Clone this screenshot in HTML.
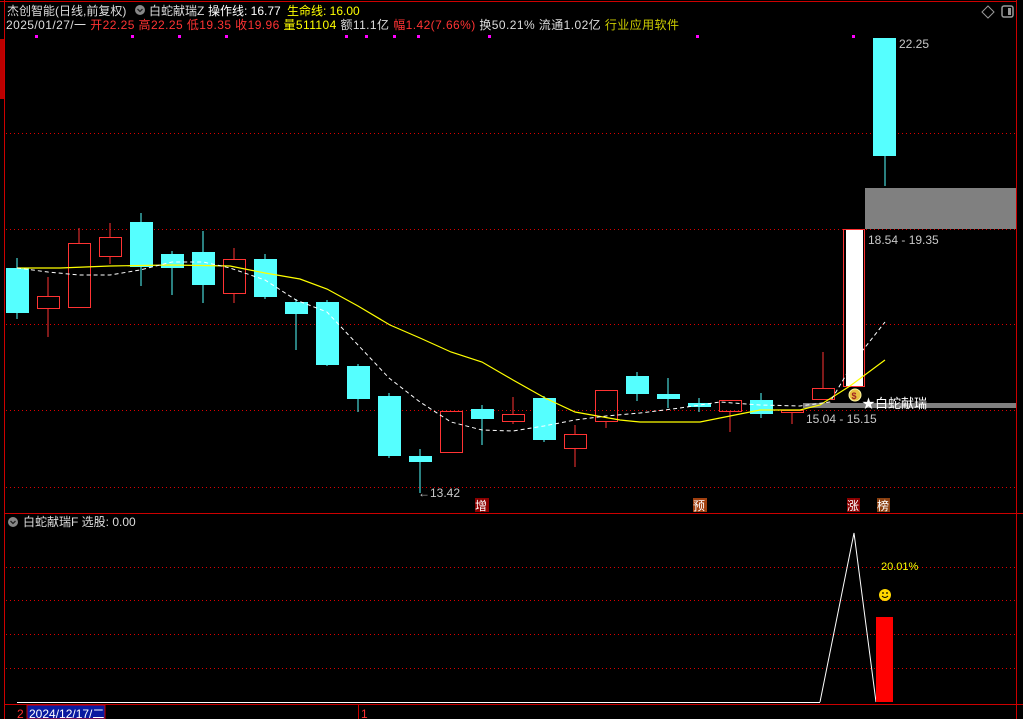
<!DOCTYPE html>
<html><head><meta charset="utf-8"><style>
body{margin:0;background:#000;width:1023px;height:719px;overflow:hidden;font-family:"Liberation Sans","Noto Sans CJK SC",sans-serif}
svg{position:absolute;left:0;top:0}
text{font-family:"Liberation Sans","Noto Sans CJK SC",sans-serif;font-size:12px}
</style></head><body>
<svg width="1023" height="719" xmlns="http://www.w3.org/2000/svg">
<rect width="1023" height="719" fill="#000"/>
<line x1="4.5" y1="0" x2="4.5" y2="719" stroke="#c00" />
<line x1="1016.5" y1="0" x2="1016.5" y2="719" stroke="#c00"/>
<line x1="0" y1="1.5" x2="1016" y2="1.5" stroke="#c00"/>
<rect x="0" y="39" width="4" height="60" fill="#b00"/>
<line x1="4" y1="513.5" x2="1023" y2="513.5" stroke="#c00"/>
<line x1="4" y1="704.5" x2="1023" y2="704.5" stroke="#c00"/>
<line x1="358.5" y1="705" x2="358.5" y2="719" stroke="#c00"/>
<g stroke="#d00" stroke-dasharray="1,3">
<line x1="6" y1="133.5" x2="1016" y2="133.5"/>
<line x1="6" y1="229.5" x2="1016" y2="229.5"/>
<line x1="6" y1="324.5" x2="1016" y2="324.5"/>
<line x1="6" y1="410.5" x2="1016" y2="410.5"/>
<line x1="6" y1="487.5" x2="1016" y2="487.5"/>
<line x1="6" y1="567.5" x2="1016" y2="567.5"/>
<line x1="6" y1="600.5" x2="1016" y2="600.5"/>
<line x1="6" y1="634.5" x2="1016" y2="634.5"/>
<line x1="6" y1="668.5" x2="1016" y2="668.5"/>
</g>
<g fill="#f0f">
<rect x="35" y="35" width="3" height="3"/><rect x="131" y="35" width="3" height="3"/><rect x="178" y="35" width="3" height="3"/><rect x="225" y="35" width="3" height="3"/><rect x="345" y="35" width="3" height="3"/><rect x="365" y="35" width="3" height="3"/><rect x="393" y="35" width="3" height="3"/><rect x="417" y="35" width="3" height="3"/><rect x="488" y="35" width="3" height="3"/><rect x="696" y="35" width="3" height="3"/><rect x="852" y="35" width="3" height="3"/>
</g>
<rect x="865" y="188" width="151" height="41" fill="#808080"/>
<rect x="803" y="403" width="213" height="5" fill="#808080"/>
<g fill="#55ffff" stroke="#55ffff">
<line x1="17" y1="258" x2="17" y2="319"/><rect x="6" y="268" width="23" height="45" stroke="none"/>
<line x1="141" y1="213" x2="141" y2="286"/><rect x="130" y="222" width="23" height="45" stroke="none"/>
<line x1="172" y1="251" x2="172" y2="295"/><rect x="161" y="254" width="23" height="14" stroke="none"/>
<line x1="203" y1="231" x2="203" y2="303"/><rect x="192" y="252" width="23" height="33" stroke="none"/>
<line x1="265" y1="254" x2="265" y2="299"/><rect x="254" y="259" width="23" height="38" stroke="none"/>
<line x1="296" y1="299" x2="296" y2="350"/><rect x="285" y="302" width="23" height="12" stroke="none"/>
<line x1="327" y1="300" x2="327" y2="366"/><rect x="316" y="302" width="23" height="63" stroke="none"/>
<line x1="358" y1="364" x2="358" y2="412"/><rect x="347" y="366" width="23" height="33" stroke="none"/>
<line x1="389" y1="393" x2="389" y2="458"/><rect x="378" y="396" width="23" height="60" stroke="none"/>
<line x1="420" y1="449" x2="420" y2="493"/><rect x="409" y="456" width="23" height="6" stroke="none"/>
<line x1="482" y1="405" x2="482" y2="445"/><rect x="471" y="409" width="23" height="10" stroke="none"/>
<line x1="544" y1="396" x2="544" y2="442"/><rect x="533" y="398" width="23" height="42" stroke="none"/>
<line x1="637" y1="372" x2="637" y2="401"/><rect x="626" y="376" width="23" height="18" stroke="none"/>
<line x1="668" y1="378" x2="668" y2="408"/><rect x="657" y="394" width="23" height="5" stroke="none"/>
<line x1="699" y1="398" x2="699" y2="412"/><rect x="688" y="403" width="23" height="4" stroke="none"/>
<line x1="761" y1="393" x2="761" y2="418"/><rect x="750" y="400" width="23" height="14" stroke="none"/>
<line x1="885" y1="156" x2="885" y2="186"/><rect x="873" y="38" width="23" height="118" stroke="none"/>
</g>
<g fill="none" stroke="#ff3333">
<line x1="48" y1="277" x2="48" y2="296"/><line x1="48" y1="308" x2="48" y2="337"/><rect x="37.5" y="296.5" width="22" height="12"/>
<line x1="79" y1="228" x2="79" y2="243"/><rect x="68.5" y="243.5" width="22" height="64"/>
<line x1="110" y1="223" x2="110" y2="237"/><line x1="110" y1="256" x2="110" y2="264"/><rect x="99.5" y="237.5" width="22" height="19"/>
<line x1="234" y1="248" x2="234" y2="259"/><line x1="234" y1="293" x2="234" y2="303"/><rect x="223.5" y="259.5" width="22" height="34"/>
<rect x="440.5" y="411.5" width="22" height="41"/>
<line x1="513" y1="397" x2="513" y2="414"/><line x1="513" y1="421" x2="513" y2="424"/><rect x="502.5" y="414.5" width="22" height="7"/>
<line x1="575" y1="425" x2="575" y2="434"/><line x1="575" y1="448" x2="575" y2="467"/><rect x="564.5" y="434.5" width="22" height="14"/>
<line x1="606" y1="421" x2="606" y2="428"/><rect x="595.5" y="390.5" width="22" height="31"/>
<line x1="730" y1="411" x2="730" y2="432"/><rect x="719.5" y="400.5" width="22" height="11"/>
<line x1="792" y1="412" x2="792" y2="424"/><rect x="781.5" y="410.5" width="22" height="2"/>
<line x1="823" y1="352" x2="823" y2="388"/><rect x="812.5" y="388.5" width="22" height="11"/>
<rect x="843.5" y="229.5" width="21" height="157"/>
</g>
<rect x="846" y="230" width="17" height="156" fill="#fff"/>
<polyline fill="none" stroke="#ffff00" stroke-width="1.2" points="17,268 60,268 110,266 170,265 230,266 265,273 300,279 327,289 358,306 390,325 420,338 451,352 482,362 513,380 545,398 575,412 620,420 640,422 700,422 720,418 760,410 800,410 820,405 850,386 885,360"/>
<polyline fill="none" stroke="#fff" stroke-dasharray="4,3" points="17,268 48,272 79,275 110,275 140,270 172,262 203,262 230,268 265,280 296,300 327,312 358,345 389,378 420,402 451,422 482,430 513,431 544,426 575,420 606,416 640,413 680,408 720,402 760,405 800,406 830,402 855,360 885,322"/>
<circle cx="855" cy="395" r="6" fill="#e8c040" stroke="#fff8a0"/>
<text x="851.5" y="399" fill="#a02020" style="font-size:9px;font-weight:bold">$</text>
<text x="862" y="408" fill="#fff" style="font-size:13px">★白蛇献瑞</text>
<text x="806" y="423" fill="#c8c8c8">15.04 - 15.15</text>
<text x="868" y="244" fill="#c8c8c8">18.54 - 19.35</text>
<text x="899" y="48" fill="#c8c8c8">22.25</text>
<text x="418" y="497" fill="#c8c8c8">←13.42</text>
<rect x="475" y="498" width="14" height="14" fill="#8b0000"/><text x="475" y="510" fill="#fff">增</text>
<rect x="693" y="498" width="14" height="14" fill="#a04010"/><text x="693" y="510" fill="#fff">预</text>
<rect x="847" y="498" width="13" height="14" fill="#8b0000"/><text x="847" y="510" fill="#fff">涨</text>
<rect x="877" y="498" width="13" height="14" fill="#8b4010"/><text x="877" y="510" fill="#fff">榜</text>
<path d="M988 6 L994 12 L988 18 L982 12 Z" fill="none" stroke="#999"/>
<rect x="1002" y="6" width="11" height="11" rx="2" fill="none" stroke="#999" stroke-width="1.5"/><rect x="1008" y="8" width="3" height="7" fill="#999"/>
<text x="7" y="15" fill="#ddd">杰创智能(日线,前复权)</text>
<circle cx="140" cy="10" r="5" fill="#888"/><path d="M137.5 9 L140 11.5 L142.5 9" fill="none" stroke="#222" stroke-width="1.3"/>
<text x="149" y="15" fill="#ddd">白蛇献瑞Z</text>
<text x="208" y="15" fill="#fff">操作线: 16.77</text>
<text x="287" y="15" fill="#ff0">生命线: 16.00</text>
<text x="6" y="29" fill="#ddd" textLength="673" lengthAdjust="spacing">2025/01/27/一 <tspan fill="#ff3333">开22.25 高22.25 低19.35 收19.96</tspan> <tspan fill="#ff0">量511104</tspan> 额11.1亿 <tspan fill="#ff3333">幅1.42(7.66%)</tspan> 换50.21% 流通1.02亿 <tspan fill="#cccc00">行业应用软件</tspan></text>
<circle cx="13" cy="522" r="5" fill="#888"/><path d="M10.5 521 L13 523.5 L15.5 521" fill="none" stroke="#222" stroke-width="1.3"/>
<text x="23" y="526" fill="#ddd">白蛇献瑞F  选股: 0.00</text>
<line x1="17" y1="702.5" x2="820" y2="702.5" stroke="#fff"/>
<polyline fill="none" stroke="#fff" points="820,702 854,533 876,702"/>
<rect x="876" y="617" width="17" height="85" fill="#f00"/>
<text x="881" y="570" fill="#ff0" style="font-size:11px">20.01%</text>
<circle cx="885" cy="595" r="6" fill="#ffd700"/><circle cx="883" cy="593" r="0.9" fill="#000"/><circle cx="887" cy="593" r="0.9" fill="#000"/><path d="M882 596 Q885 599 888 596" fill="none" stroke="#000"/>
<text x="17" y="718" fill="#f33">2</text>
<rect x="27" y="705" width="78" height="14" fill="#0a1aa0" stroke="#c00"/>
<text x="29" y="718" fill="#fff">2024/12/17/二</text>
<text x="361" y="718" fill="#f33">1</text>
</svg>
</body></html>
